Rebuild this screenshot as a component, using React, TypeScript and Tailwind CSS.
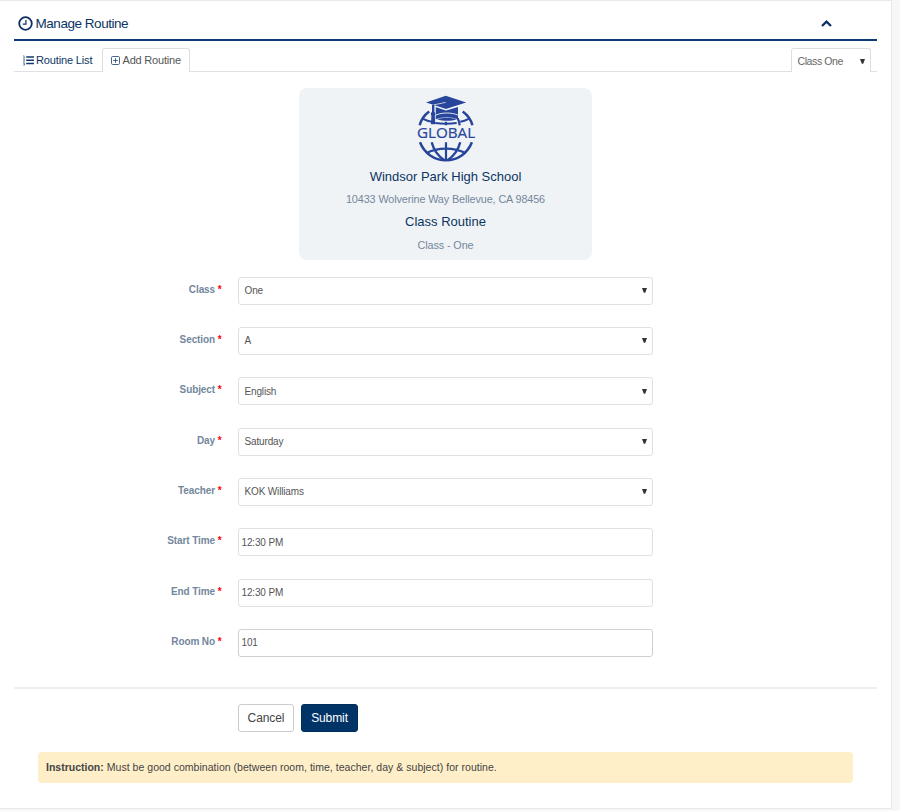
import type { ReactNode } from "react";

type Field = { label: string; value: string; kind: "select" | "input"; active?: boolean };

const fields: Field[] = [
  { label: "Class", value: "One", kind: "select" },
  { label: "Section", value: "A", kind: "select" },
  { label: "Subject", value: "English", kind: "select" },
  { label: "Day", value: "Saturday", kind: "select" },
  { label: "Teacher", value: "KOK Williams", kind: "select" },
  { label: "Start Time", value: "12:30 PM", kind: "input" },
  { label: "End Time", value: "12:30 PM", kind: "input" },
  { label: "Room No", value: "101", kind: "input", active: true },
];

function Arrow() {
  return (
    <svg className="h-[5px] w-[5px] shrink-0" viewBox="0 0 5 5" fill="#333">
      <path d="M0 0h5L3.2 4.8H1.8z" />
    </svg>
  );
}

function ClockIcon() {
  return (
    <svg className="size-[15px] shrink-0" viewBox="0 0 15 15" fill="none" stroke="#0b2f63">
      <circle cx="7.5" cy="7.5" r="6.3" strokeWidth="1.8" />
      <path d="M7.9 4v4.200H4.800" strokeWidth="1.2" />
    </svg>
  );
}

function ListIcon() {
  return (
    <svg className="h-[11px] w-[11px] shrink-0" viewBox="0 0 11 11" fill="none" stroke="#123c6b">
      <path d="M3.2 2H11M3.2 5.3H11M3.2 8.5H11" strokeWidth="1.5" />
      <path d="M.3.8h.8v2M.2 2.9h1.7M.2 4.3h1.2v1L.3 6.3h1.5M.2 7.8h1.3L.8 8.8h.7v1.3H.1" strokeWidth=".6" />
    </svg>
  );
}

function PlusSquareIcon() {
  return (
    <svg className="size-[9px] shrink-0" viewBox="0 0 9 9" fill="none" stroke="#45658a">
      <rect x=".5" y=".5" width="8" height="8" rx="1.2" />
      <path d="M4.5 2.2v4.6M2.2 4.5h4.6" />
    </svg>
  );
}

function Logo() {
  return (
    <svg className="h-[68px] w-[80px] overflow-visible" viewBox="-10.2 -0.8 80 68">
      <g fill="none" stroke="#27459b" strokeWidth="2.500">
        <path d="M3.500 30.500C5 24.500 8.300 20.200 13 16.800M46.500 16.800c4.700 3.400 8.200 7.700 9.700 13.700" />
        <path d="M3.800 47.500C8 58.500 18.300 65.500 29.800 65.500S51.500 58.500 55.700 47.500" />
        <path d="M29.800 27v3.500M29.800 47.500v18M43.500 30.500c-.4-2.500-1-5-2-7" strokeWidth="2.200" />
        <path d="M15.500 47.500c1.800 7.300 6.300 13.500 12.500 18M44 47.500c-1.800 7.300-6.300 13.500-12.500 18" strokeWidth="2.400" />
        <path d="M7 24c3 1.600 5.500 2.500 8.500 3M52.500 24c-3 1.600-5.500 2.500-8.500 3M19 28.200c7.500 1 14 1 21.500 0" strokeWidth="2" />
        <path d="M10 58.500C21 52.200 38.500 52.200 49.500 58.500" strokeWidth="2.200" />
      </g>
      <path d="M19.500 12.200 29.800 15.600l12-3.400v12.300c-6.500-2.700-15.800-2.700-22.300 0z" fill="#27459b" />
      <path d="M19.500 20.300c6.500-2.800 15.800-2.800 22.300 0" fill="none" stroke="#f0f3f5" strokeWidth=".9" />
      <path d="M21 24.500c6 2 14 2 19.500 0-6-2-13.500-2-19.500 0z" fill="#27459b" />
      <path d="M29.600 1 50 7.700 29.800 14.300 9.800 7.700z" fill="#27459b" />
      <path d="M10 8.500 29.800 15 50 8.500" fill="none" stroke="#f0f3f5" strokeWidth=".6" />
      <path d="M17 11v11" fill="none" stroke="#f0f3f5" strokeWidth="4.200" />
      <path d="M29.500 7.600 17 10.200" fill="none" stroke="#dfe5ef" strokeWidth=".8" />
      <path d="M17 10v11" fill="none" stroke="#27459b" strokeWidth="2.400" />
      <path d="M16.900 17c2.300 0 2.700 2.300 1.700 4l.5 8.500h-4.400l.5-8.500c-1-1.700-.6-4 1.700-4z" fill="#27459b" />
      <text x="29.800" y="43.700" textAnchor="middle" fontFamily="'Open Sans', sans-serif" fontSize="15.200" fill="#27459b" stroke="#27459b" strokeWidth=".2">GLOBAL</text>
    </svg>
  );
}

function FieldRow({ field }: { field: Field }) {
  const isSelect = field.kind === "select";
  return (
    <div className="flex h-[50.35px] items-start">
      <div className="mr-[16.500px] w-[221.500px] pt-[6px] text-right text-[10px] font-bold leading-[14px] tracking-[-0.1px] text-[#73879c]">
        {field.label} <span className="text-[#ff0000]">*</span>
      </div>
      <Control active={field.active}>
        <span className={isSelect ? "pl-[5.5px]" : "pl-[2.5px]"}>{field.value}</span>
        {isSelect && <Arrow />}
      </Control>
    </div>
  );
}

function Control({ children, active }: { children: ReactNode; active?: boolean }) {
  return (
    <div className={`flex h-7 w-[415px] items-center justify-between rounded-[3px] border pr-[5px] text-[10px] tracking-[-0.15px] text-[#555] ${active ? "border-[#cfcfd4]" : "border-[#e1e1e2]"}`}>
      {children}
    </div>
  );
}

export default function App() {
  return (
    <div className="h-[811px] w-[900px] overflow-hidden bg-[#f7f7f7] font-['Liberation_Sans',Arial,sans-serif]">
      <main className="flex h-[809px] w-[892px] flex-col border-y border-r border-[#e6e9ed] bg-white pl-[14px] pr-[14px]">
        <header className="flex h-10 shrink-0 items-center justify-between border-b-2 border-[#0b3a75] pl-[3.500px] pr-[45px] pt-[6px]">
          <h1 className="flex items-center gap-[3px] text-[13.500px] tracking-[-0.46px] text-[#0b3563]">
            <ClockIcon />
            <span className="pt-[2px]">Manage Routine</span>
          </h1>
          <svg className="h-[7px] w-[11px]" viewBox="0 0 11 7" fill="none" stroke="#0b2f63" strokeWidth="2.200">
            <path d="M1 6 5.500 1.600 10 6" />
          </svg>
        </header>

        <nav className="flex h-[31px] shrink-0 items-end border-b border-[#e0e0e0] pr-[6px] text-[11px] tracking-[-0.2px]">
          <div className="flex h-[23px] w-[88px] items-center gap-[2px] pl-[9px] pt-px text-[#0b3563]">
            <ListIcon />
            <span className="tracking-[-0.15px]">Routine List</span>
          </div>
          <div className="-mb-px flex h-[24px] w-[88px] items-center gap-[2.500px] rounded-t-[3px] border border-b-0 border-[#dedede] bg-white pl-[8px] text-[#555]">
            <PlusSquareIcon />
            <span>Add Routine</span>
          </div>
          <div className="-mb-px ml-auto flex h-[24px] w-[80px] items-center justify-between rounded-t-[3px] border border-b-0 border-[#dedede] bg-white pl-[5.500px] pr-[5px] pt-[2px] text-[10.500px] tracking-[-0.4px] text-[#666]">
            <span>Class One</span>
            <Arrow />
          </div>
        </nav>

        <section className="ml-[285px] mt-[16px] flex h-[172px] w-[293px] shrink-0 flex-col items-center rounded-[8px] bg-[#f0f3f5] pt-[6px]">
          <Logo />
          <h2 className="mt-[4px] h-[22px] text-[13px] leading-[22px] text-[#0b3563]">Windsor Park High School</h2>
          <p className="h-[23px] text-[10.800px] leading-[23px] tracking-[-0.1px] text-[#73879c]">10433 Wolverine Way Bellevue, CA 98456</p>
          <h3 className="-mt-px h-[24px] text-[13px] leading-[23px] text-[#0b3563]">Class Routine</h3>
          <p className="h-[23px] text-[10.800px] leading-[22px] tracking-[-0.1px] text-[#73879c]">Class - One</p>
        </section>

        <form className="-ml-[14px] mt-[16.500px] h-[410px] shrink-0">
          {fields.map((field) => (
            <FieldRow key={field.label} field={field} />
          ))}
        </form>

        <div className="flex h-[45.500px] shrink-0 items-end gap-[7px] border-t-2 border-[#efefef] pl-[224px] text-[12px] tracking-[-0.1px]">
          <button className="h-7 w-[56px] rounded-[3px] border border-[#ccc] bg-white text-[#444]">Cancel</button>
          <button className="h-7 w-[57px] rounded-[3px] border border-[#002d5a] bg-[#003366] text-white">Submit</button>
        </div>

        <p className="ml-[24px] mt-[19.500px] flex h-[31px] w-[815px] shrink-0 items-center gap-[3px] rounded-[4px] bg-[#ffefc9] pl-[8px] pt-[2px] text-[10.500px] text-[#444]">
          <strong>Instruction:</strong>
          <span className="tracking-[0.03px]">Must be good combination (between room, time, teacher, day &amp; subject) for routine.</span>
        </p>
      </main>
    </div>
  );
}
